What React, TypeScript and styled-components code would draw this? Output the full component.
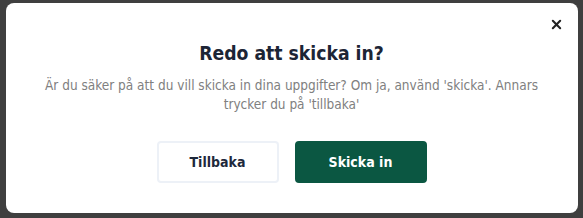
import React from 'react';
import styled, { createGlobalStyle } from 'styled-components';

const GlobalStyle = createGlobalStyle`
  html, body {
    margin: 0;
    padding: 0;
    background: #3f3f3f;
  }
  * {
    box-sizing: border-box;
  }
`;

const Backdrop = styled.div`
  width: 583px;
  height: 218px;
  display: flex;
  align-items: flex-start;
  justify-content: center;
  padding-top: 3px;
  background: #3f3f3f;
  font-family: "DejaVu Sans Condensed", "DejaVu Sans", "Noto Sans", sans-serif;
`;

const Modal = styled.div`
  position: relative;
  width: 572px;
  height: 210px;
  background: #fff;
  border-radius: 8px;
  display: flex;
  flex-direction: column;
  align-items: center;
  padding: 38px 20px 0;
`;

const CloseButton = styled.button`
  position: absolute;
  top: 9px;
  right: 9px;
  width: 24px;
  height: 24px;
  border: none;
  background: transparent;
  padding: 0;
  display: flex;
  align-items: center;
  justify-content: center;
  cursor: pointer;
`;

const Title = styled.h2`
  margin: 0;
  font-size: 19.2px;
  line-height: 26px;
  font-weight: 700;
  color: #1c2536;
`;

const Text = styled.p`
  margin: 9px 0 0;
  font-size: 13.5px;
  line-height: 19px;
  color: #808080;
  text-align: center;
`;

const Actions = styled.div`
  display: flex;
  gap: 16px;
  margin-top: 27px;
`;

const Button = styled.button<{ $primary?: boolean }>`
  height: 42px;
  width: ${(p) => (p.$primary ? '132px' : '122px')};
  border-radius: 4px;
  font-family: inherit;
  font-size: 14px;
  font-weight: 700;
  cursor: pointer;
  border: 2px solid ${(p) => (p.$primary ? '#0b5742' : '#edf1f7')};
  background: ${(p) => (p.$primary ? '#0b5742' : '#fff')};
  color: ${(p) => (p.$primary ? '#fff' : '#1e293b')};
`;

const App: React.FC = () => {
  return (
    <>
      <GlobalStyle />
      <Backdrop>
        <Modal>
          <CloseButton aria-label="Stäng">
            <svg width="11" height="11" viewBox="0 0 12 12">
              <path d="M2 2 L10 10 M10 2 L2 10" stroke="#222" strokeWidth="2.3" strokeLinecap="round" />
            </svg>
          </CloseButton>
          <Title>Redo att skicka in?</Title>
          <Text>
            Är du säker på att du vill skicka in dina uppgifter? Om ja, använd 'skicka'. Annars
            <br />
            trycker du på 'tillbaka'
          </Text>
          <Actions>
            <Button>Tillbaka</Button>
            <Button $primary>Skicka in</Button>
          </Actions>
        </Modal>
      </Backdrop>
    </>
  );
};

export default App;
